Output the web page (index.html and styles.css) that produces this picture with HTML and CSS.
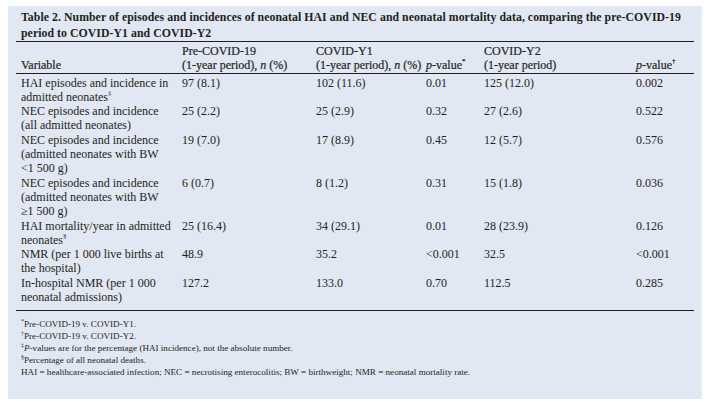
FILE: index.html
```html
<!DOCTYPE html>
<html>
<head>
<meta charset="utf-8">
<link rel="stylesheet" href="styles.css">
</head>
<body>
<div class="panel">
  <p class="title">Table 2. Number of episodes and incidences of neonatal HAI and NEC and neonatal mortality data, comparing the pre-COVID-19 period to COVID-Y1 and COVID-Y2</p>
  <table class="data">
    <colgroup>
      <col class="c-var"><col class="c-pre"><col class="c-y1"><col class="c-p1"><col class="c-y2"><col class="c-p2">
    </colgroup>
    <thead>
      <tr>
        <th>Variable</th>
        <th>Pre-COVID-19<br>(1-year period), <i>n</i> (%)</th>
        <th>COVID-Y1<br>(1-year period), <i>n</i> (%)</th>
        <th><i>p</i>-value<sup>*</sup></th>
        <th>COVID-Y2<br>(1-year period)</th>
        <th><i>p</i>-value<sup>†</sup></th>
      </tr>
    </thead>
    <tbody>
      <tr><td>HAI episodes and incidence in admitted neonates<sup>‡</sup></td><td>97 (8.1)</td><td>102 (11.6)</td><td>0.01</td><td>125 (12.0)</td><td>0.002</td></tr>
      <tr><td>NEC episodes and incidence (all admitted neonates)</td><td>25 (2.2)</td><td>25 (2.9)</td><td>0.32</td><td>27 (2.6)</td><td>0.522</td></tr>
      <tr><td>NEC episodes and incidence (admitted neonates with BW &lt;1 500 g)</td><td>19 (7.0)</td><td>17 (8.9)</td><td>0.45</td><td>12 (5.7)</td><td>0.576</td></tr>
      <tr><td>NEC episodes and incidence (admitted neonates with BW ≥1 500 g)</td><td>6 (0.7)</td><td>8 (1.2)</td><td>0.31</td><td>15 (1.8)</td><td>0.036</td></tr>
      <tr><td>HAI mortality/year in admitted neonates<sup>§</sup></td><td>25 (16.4)</td><td>34 (29.1)</td><td>0.01</td><td>28 (23.9)</td><td>0.126</td></tr>
      <tr><td>NMR (per 1 000 live births at the hospital)</td><td>48.9</td><td>35.2</td><td>&lt;0.001</td><td>32.5</td><td>&lt;0.001</td></tr>
      <tr><td>In-hospital NMR (per 1 000 neonatal admissions)</td><td>127.2</td><td>133.0</td><td>0.70</td><td>112.5</td><td>0.285</td></tr>
    </tbody>
  </table>
  <div class="notes">
    <p><sup>*</sup>Pre-COVID-19 v. COVID-Y1.</p>
    <p><sup>†</sup>Pre-COVID-19 v. COVID-Y2.</p>
    <p><sup>‡</sup><i>P</i>-values are for the percentage (HAI incidence), not the absolute number.</p>
    <p><sup>§</sup>Percentage of all neonatal deaths.</p>
    <p>HAI = healthcare-associated infection; NEC = necrotising enterocolitis; BW = birthweight; NMR = neonatal mortality rate.</p>
  </div>
</div>
</body>
</html>
```

FILE: styles.css
```css
html, body {
  margin: 0;
  padding: 0;
  background: #ffffff;
}

.panel {
  margin: 6px 0 0 8px;
  width: 694px;
  height: 393px;
  box-sizing: border-box;
  background: #e1e7f3;
  padding: 3px 8px 0 8px;
  font-family: "Liberation Serif", "Times New Roman", serif;
  color: #231f20;
}

.title {
  margin: 0 0 0 5px;
  font-weight: bold;
  font-size: 11.8px;
  line-height: 16px;
  letter-spacing: 0.05px;
}

.data {
  width: 678px;
  border-collapse: collapse;
  table-layout: fixed;
  font-size: 12px;
  line-height: 14.3px;
}

.c-var { width: 161px; }
.c-pre { width: 134px; }
.c-y1 { width: 110px; }
.c-p1 { width: 58px; }
.c-y2 { width: 152px; }
.c-p2 { width: 63px; }

.data thead th {
  border-top: 1.5px solid #231f20;
  border-bottom: 1px solid #231f20;
  font-weight: normal;
  -webkit-text-stroke: 0.2px #231f20;
  text-align: left;
  vertical-align: bottom;
  padding: 2px 5px 0 5px;
  white-space: nowrap;
}

.data td {
  vertical-align: top;
  padding: 0 5px;
  text-align: left;
}

.data tbody tr:first-child td {
  padding-top: 2px;
}

.data tbody tr:last-child td {
  padding-bottom: 6px;
  border-bottom: 1px solid #231f20;
}

.data sup {
  font-size: 7px;
  line-height: 1;
  vertical-align: top;
}

.notes {
  margin: 7px 0 0 5px;
  font-size: 9.1px;
  line-height: 12px;
}

.notes p {
  margin: 0;
}

.notes sup {
  font-size: 6px;
  line-height: 1;
  vertical-align: top;
}
```
